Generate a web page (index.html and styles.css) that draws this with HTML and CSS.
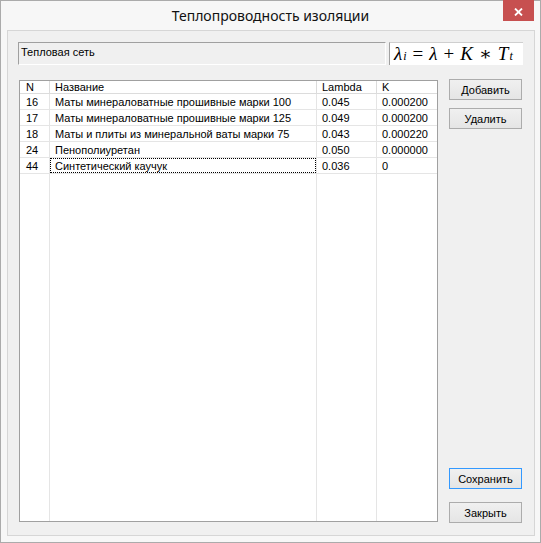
FILE: index.html
```html
<!DOCTYPE html>
<html lang="ru">
<head>
<meta charset="utf-8">
<title>Теплопроводность изоляции</title>
<link rel="stylesheet" href="styles.css">
</head>
<body>
<div class="window">
  <div class="titlebar">
    <div class="title">Теплопроводность изоляции</div>
    <div class="close">
      <svg width="9" height="8" viewBox="0 0 9 8"><path d="M1 0.5 L8 7.5 M8 0.5 L1 7.5" stroke="#fff" stroke-width="1.8" fill="none"/></svg>
    </div>
  </div>
  <div class="client">
    <div class="top-row">
      <div class="static">Тепловая сеть</div>
      <div class="formula">
        <span class="mi">λ</span><sub class="mi">i</sub><span class="op">=</span><span class="mi">λ</span><span class="op">+</span><span class="mi">K</span><span class="op">∗</span><span class="mi">T</span><sub class="mi">t</sub>
      </div>
    </div>
    <div class="main-row">
      <div class="list">
        <div class="hd">N</div><div class="hd">Название</div><div class="hd">Lambda</div><div class="hd last">K</div>
        <div class="c">16</div><div class="c">Маты минераловатные прошивные марки 100</div><div class="c">0.045</div><div class="c last">0.000200</div>
        <div class="c">17</div><div class="c">Маты минераловатные прошивные марки 125</div><div class="c">0.049</div><div class="c last">0.000200</div>
        <div class="c">18</div><div class="c">Маты и плиты из минеральной ваты марки 75</div><div class="c">0.043</div><div class="c last">0.000220</div>
        <div class="c">24</div><div class="c">Пенополиуретан</div><div class="c">0.050</div><div class="c last">0.000000</div>
        <div class="c">44</div><div class="c focus-cell"><div class="focus">Синтетический каучук</div></div><div class="c">0.036</div><div class="c last">0</div>
        <div class="f"></div><div class="f"></div><div class="f"></div><div class="f last"></div>
      </div>
      <div class="buttons">
        <div class="group top-group">
          <button class="btn">Добавить</button>
          <button class="btn">Удалить</button>
        </div>
        <div class="group bottom-group">
          <button class="btn default">Сохранить</button>
          <button class="btn">Закрыть</button>
        </div>
      </div>
    </div>
  </div>
</div>
</body>
</html>
```
FILE: styles.css
```css
* { box-sizing: border-box; }
html, body { margin: 0; padding: 0; background: #f7f7f7; }
body { font-family: "Liberation Sans", Arial, sans-serif; font-size: 11px; color: #000; }

.window {
  width: 541px;
  height: 543px;
  border: 1px solid #ababab;
  background: #f7f7f7;
  display: flex;
  flex-direction: column;
}

.titlebar {
  height: 29px;
  flex: none;
  display: grid;
  grid-template-columns: 1fr auto 1fr;
}
.title {
  grid-column: 2;
  font-family: "Noto Sans", "Open Sans", sans-serif;
  font-size: 14px;
  line-height: 30px;
  color: #111;
  white-space: nowrap;
}
.close {
  grid-column: 3;
  justify-self: end;
  align-self: start;
  margin-top: -1px;
  margin-right: 6px;
  width: 31px;
  height: 21px;
  background: #c75050;
  display: flex;
  align-items: center;
  justify-content: center;
  padding-top: 2px;
}
.close svg { display: block; }

.client {
  margin: 0 5px 6px 6px;
  border: 1px solid #d6d6d6;
  background: #f0f0f0;
  flex: 1;
  display: flex;
  flex-direction: column;
  padding: 11px 11px 13px 10px;
}

.top-row {
  display: flex;
  gap: 3px;
  height: 23px;
  flex: none;
}
.static {
  width: 368px;
  border-top: 1px solid #a0a0a0;
  border-left: 1px solid #a0a0a0;
  border-right: 1px solid #ffffff;
  border-bottom: 1px solid #ffffff;
  padding: 3px 0 0 2px;
  line-height: 13px;
}
.formula {
  width: 134px;
  background: #fff;
  border-top: 1px solid #cfcfcf;
  border-left: 1px solid #a0a0a0;
  font-family: "Liberation Serif", "DejaVu Serif", serif;
  font-size: 19px;
  line-height: 21px;
  padding-left: 4px;
  white-space: nowrap;
  display: flex;
  align-items: baseline;
}
.formula .mi { font-style: italic; }
.formula sub { font-size: 12px; vertical-align: -3px; line-height: 0; margin-left: 1px; }
.formula .op { font-style: normal; margin: 0 6px; }

.main-row {
  margin-top: 15px;
  display: flex;
  gap: 11px;
  height: 442px;
  flex: none;
}

.list {
  margin-left: 1px;
  width: 419px;
  height: 442px;
  border: 1px solid #a0a0a0;
  background: #fff;
  display: grid;
  grid-template-columns: 30px 267px 60px 1fr;
  grid-template-rows: 13px repeat(5, 16px) 1fr;
}
.hd, .c {
  border-right: 1px solid #e5e5e5;
  border-bottom: 1px solid #e5e5e5;
  padding-left: 5px;
  white-space: nowrap;
  overflow: hidden;
}
.hd { line-height: 12px; border-color: #dcdcdc; }
.c { line-height: 16px; padding-left: 5px; }
.c:nth-child(4n+1), .hd:first-child { padding-left: 6px; }
.last { border-right: none; }
.f { border-right: 1px solid #e5e5e5; }
.f.last { border-right: none; }
.focus-cell { padding-left: 0; }
.focus {
  height: 15px;
  border: 1px dotted #000;
  padding-left: 4px;
  line-height: 14px;
}

.buttons {
  width: 73px;
  display: flex;
  flex-direction: column;
  justify-content: space-between;
  margin-top: -1px;
  margin-bottom: -1px;
}
.group { display: flex; flex-direction: column; }
.top-group { gap: 8px; }
.bottom-group { gap: 13px; }
.btn {
  width: 73px;
  height: 21px;
  margin: 0;
  padding: 0;
  border: 1px solid #acacac;
  background: linear-gradient(#f0f0f0, #e5e5e5);
  font-family: "Liberation Sans", Arial, sans-serif;
  font-size: 11px;
  color: #000;
  text-align: center;
}
.btn.default { border-color: #3399ff; }
```
